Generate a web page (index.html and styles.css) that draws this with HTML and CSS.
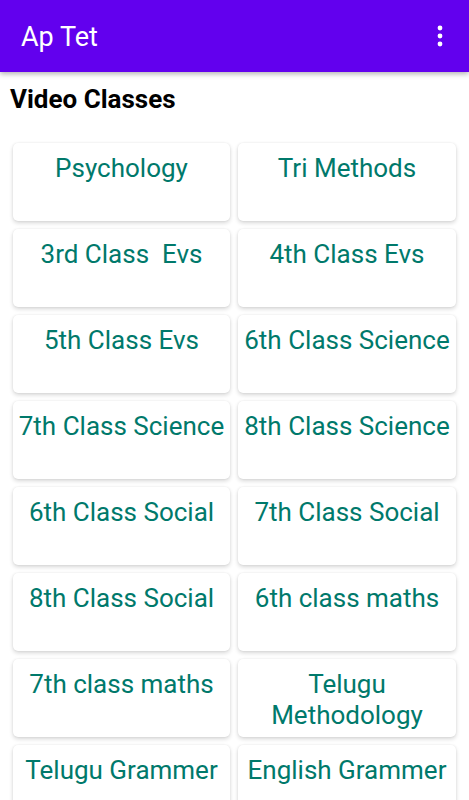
FILE: index.html
```html
<!DOCTYPE html>
<html lang="en">
<head>
    <meta charset="UTF-8">
    <meta name="viewport" content="width=device-width, initial-scale=1.0">
    <title>Ap Tet</title>
    <link rel="stylesheet" href="styles.css">
</head>
<body>
    <div class="appbar">
        <span class="title">Ap Tet</span>
        <svg class="menu" width="8" height="24" viewBox="0 0 8 24">
            <circle cx="4" cy="4" r="2.4" fill="#fff"/>
            <circle cx="4" cy="12" r="2.4" fill="#fff"/>
            <circle cx="4" cy="20" r="2.4" fill="#fff"/>
        </svg>
    </div>

    <h2 class="heading">Video Classes</h2>

    <div class="grid">
        <div class="card">Psychology</div>
        <div class="card">Tri Methods</div>
        <div class="card">3rd Class&nbsp; Evs</div>
        <div class="card">4th Class Evs</div>
        <div class="card">5th Class Evs</div>
        <div class="card">6th Class Science</div>
        <div class="card">7th Class Science</div>
        <div class="card">8th Class Science</div>
        <div class="card">6th Class Social</div>
        <div class="card">7th Class Social</div>
        <div class="card">8th Class Social</div>
        <div class="card">6th class maths</div>
        <div class="card">7th class maths</div>
        <div class="card">Telugu Methodology</div>
        <div class="card">Telugu Grammer</div>
        <div class="card">English Grammer</div>
    </div>
</body>
</html>
```

FILE: styles.css
```css
body {
    margin: 0;
    font-family: Roboto, "Noto Sans", sans-serif;
    background-color: #ffffff;
    overflow: hidden;
}
.appbar {
    height: 72px;
    background-color: #6200ee;
    display: flex;
    align-items: center;
    justify-content: space-between;
    padding: 0 25px 0 21px;
    box-shadow: 0 2px 5px rgba(0, 0, 0, 0.3);
    position: relative;
}
.title {
    color: #ffffff;
    font-size: 27px;
    margin-top: 2px;
}
.heading {
    margin: 0;
    padding: 12px 10px 0;
    font-size: 26px;
    font-weight: bold;
    color: #000000;
    line-height: 30px;
}
.grid {
    display: grid;
    grid-template-columns: 217px 218px;
    gap: 8px;
    padding: 29px 13px 0;
}
.card {
    height: 78px;
    box-sizing: border-box;
    padding: 10px 2px 0;
    background-color: #ffffff;
    border-radius: 5px;
    box-shadow: 0 2px 4px rgba(0, 0, 0, 0.16), 0 0 2px rgba(0, 0, 0, 0.08);
    color: #00796b;
    font-size: 26px;
    line-height: 31px;
    text-align: center;
}
```
